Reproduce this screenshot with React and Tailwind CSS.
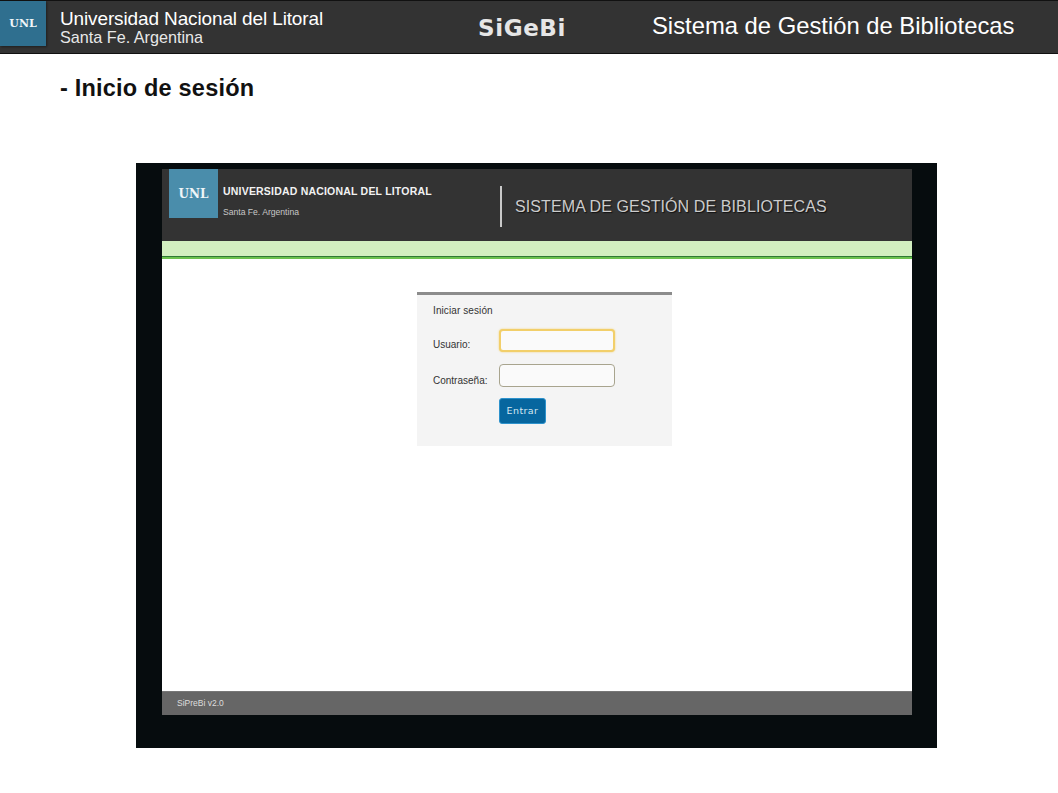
export default function App() {
  const sans = "font-['Liberation_Sans',Arial,sans-serif]";
  return (
    <div className={`w-[1058px] h-[793px] bg-white overflow-hidden ${sans}`}>
      {/* Slide header */}
      <header className="h-[54px] bg-[#333333] border-t border-b border-t-[#111] border-b-[#111] flex items-start">
        <div className="w-[46px] h-[45px] bg-[#2f6f8f] flex items-center justify-center shrink-0 shadow-[1px_1px_2px_rgba(0,0,0,0.4)]">
          <span className="font-['DejaVu_Serif',serif] font-bold text-[11px] leading-none text-[#eef5f8]">UNL</span>
        </div>
        <div className="ml-[14px] w-[418px] shrink-0 text-white pt-[8px]">
          <div className="text-[19px] leading-[19px] tracking-[-0.13px] whitespace-nowrap">Universidad Nacional del Litoral</div>
          <div className="text-[16.2px] leading-[18px] text-[#e8e8e8] whitespace-nowrap">Santa Fe. Argentina</div>
        </div>
        <div className="w-[174px] shrink-0 pt-[15px] text-[23px] leading-[24px] font-bold text-[#e6e6e6] font-['DejaVu_Sans',sans-serif] tracking-[0.6px] whitespace-nowrap">SiGeBi</div>
        <div className="pt-[11px] text-[23.8px] leading-[27px] text-white whitespace-nowrap">Sistema de Gestión de Bibliotecas</div>
      </header>

      <h1 className="ml-[60px] mt-[20px] text-[23.5px] leading-[28px] font-bold text-[#111] tracking-[0.2px]">- Inicio de sesión</h1>

      {/* Embedded application screenshot */}
      <div className="ml-[136px] mt-[61px] w-[801px] h-[585px] bg-[#060c0e] pt-[6px] pl-[26px]">
        <div className="w-[750px] h-[546px] flex flex-col bg-white">
          <div className="h-[72px] bg-[#333333] flex items-start shrink-0">
            <div className="ml-[7px] w-[49px] h-[49px] bg-[#4a8dab] flex items-center justify-center shrink-0">
              <span className="font-['DejaVu_Serif',serif] font-bold text-[12px] leading-none text-[#eef5f8]">UNL</span>
            </div>
            <div className="ml-[5px] w-[277px] shrink-0">
              <div className="mt-[16px] text-[10.5px] leading-[13px] font-bold text-[#f2f2f2] tracking-[0.2px] whitespace-nowrap">UNIVERSIDAD NACIONAL DEL LITORAL</div>
              <div className="mt-[9px] text-[8.6px] leading-[11px] text-[#c8c8c8] whitespace-nowrap">Santa Fe. Argentina</div>
            </div>
            <div className="mt-[17px] w-[2px] h-[41px] bg-[#c9c9c9] shrink-0"></div>
            <div className="ml-[13px] mt-[28px] text-[16px] leading-[19px] tracking-[0.1px] text-[#cccccc] whitespace-nowrap [text-shadow:1px_1px_1px_#111]">SISTEMA DE GESTIÓN DE BIBLIOTECAS</div>
          </div>
          <div className="h-[15px] bg-[#d2efc0] shrink-0"></div>
          <div className="h-px bg-[#2f7a35] shrink-0"></div>
          <div className="h-[2px] bg-[#6cc24f] shrink-0"></div>

          <main className="flex-1 pt-[33px] pl-[255px]">
            <div className="w-[255px] h-[154px] bg-[#f4f4f4] border-t-[3px] border-t-[#8c8c8c] pl-[16px] text-[#333] text-[10px]">
              <div className="pt-[9px] leading-[13px] tracking-[0.1px]">Iniciar sesión</div>
              <div className="mt-[12px] flex items-center h-[23px]">
                <label className="w-[66px] shrink-0 leading-[13px] pt-[7px]">Usuario:</label>
                <div className="w-[116px] h-[23px] rounded-[4px] bg-[#fafafa] border-2 border-[#f2cf6a] shadow-[0_0_2px_#f2cf6a]"></div>
              </div>
              <div className="mt-[12px] flex items-center h-[23px]">
                <label className="w-[66px] shrink-0 leading-[13px] pt-[10px]">Contraseña:</label>
                <div className="w-[116px] h-[23px] rounded-[4px] bg-[#fafafa] border border-[#a8a48e]"></div>
              </div>
              <div className="mt-[11px] ml-[66px] w-[47px] h-[26px] rounded-[3px] bg-[#06669f] border border-[#2d92cc] flex items-center justify-center text-[#d5e8f2] text-[9.5px] tracking-[0.4px] font-['DejaVu_Sans',sans-serif]">Entrar</div>
            </div>
          </main>

          <footer className="h-[24px] bg-[#666666] flex items-center pl-[15px] text-[8.5px] text-[#dddddd] shrink-0 border-t border-t-[#777]">SiPreBi v2.0</footer>
        </div>
      </div>
    </div>
  );
}
